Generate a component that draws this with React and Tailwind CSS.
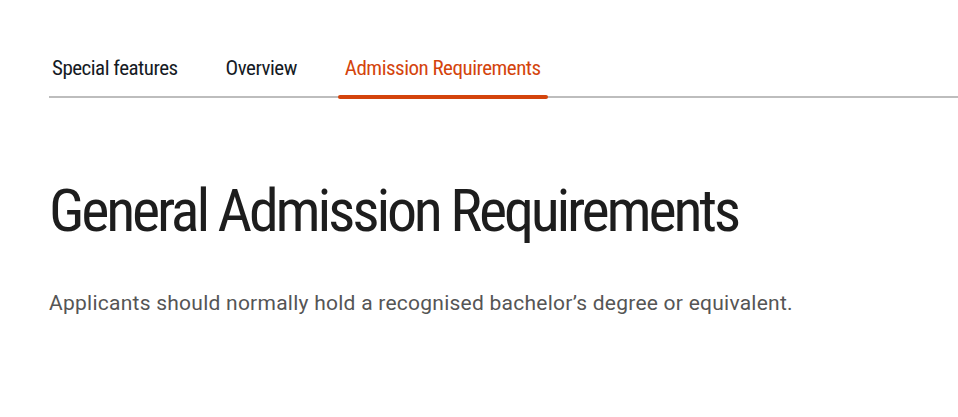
const tabs = ['Special features', 'Overview', 'Admission Requirements'];

export default function App() {
  const active = 2;
  return (
    <div className="min-h-screen bg-white pl-[49px] pt-[48px]">
      {/* Tabs */}
      <div className="flex gap-[34px] border-b-2 border-[#bdbdbd] pl-[3px] font-['Roboto_Condensed',sans-serif]">
        {tabs.map((t, i) => (
          <div
            key={t}
            className={`relative pb-[8px] text-[21px] leading-[40px] tracking-[-0.5px] ${i === 0 ? 'pr-[7px]' : 'px-[7px]'} ${
              i === active ? 'text-[#d4440c]' : 'text-[#151a24]'
            }`}
          >
            {t}
            {i === active && (
              <span className="absolute left-0 right-0 -bottom-[3px] h-[4px] rounded-full bg-[#d4440c]" />
            )}
          </div>
        ))}
      </div>

      {/* Content */}
      <h1 className="mt-[77px] font-['Roboto_Condensed',sans-serif] text-[60px] leading-[72px] tracking-[-3.2px] text-[#1d1d1d]">
        General Admission Requirements
      </h1>
      <p className="mt-[42px] font-['Roboto',sans-serif] text-[21px] leading-[28px] tracking-[0.25px] text-[#555555]">
        Applicants should normally hold a recognised bachelor’s degree or equivalent.
      </p>
    </div>
  );
}
